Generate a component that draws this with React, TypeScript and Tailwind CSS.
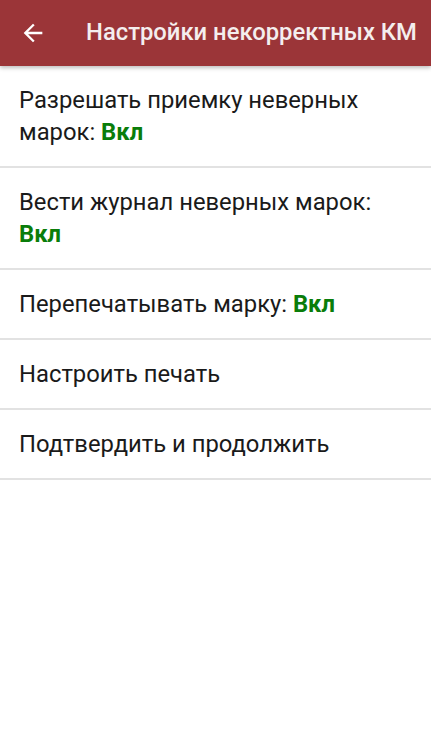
import React from 'react';

const items: { label: string; value?: string }[] = [
  { label: 'Разрешать приемку неверных марок:', value: 'Вкл' },
  { label: 'Вести журнал неверных марок:', value: 'Вкл' },
  { label: 'Перепечатывать марку:', value: 'Вкл' },
  { label: 'Настроить печать' },
  { label: 'Подтвердить и продолжить' },
];

const App: React.FC = () => {
  return (
    <div
      className="w-[431px] h-[739px] bg-white flex flex-col overflow-hidden"
      style={{ fontFamily: 'Roboto, "Noto Sans", sans-serif' }}
    >
      <header className="relative z-10 h-[66px] shrink-0 bg-[#9b3538] flex items-center shadow-[0_2px_4px_rgba(0,0,0,0.25)]">
        <button className="w-[86px] h-full flex items-center pl-[19px] text-white">
          <svg width="28" height="28" viewBox="0 0 24 24" fill="currentColor">
            <path d="M20 11H7.83l5.59-5.59L12 4l-8 8 8 8 1.41-1.41L7.83 13H20v-2z" />
          </svg>
        </button>
        <h1 className="text-[#f4eeee] text-[23.8px] font-medium whitespace-nowrap">
          Настройки некорректных КМ
        </h1>
      </header>

      <ul className="flex flex-col">
        {items.map((item) => (
          <li
            key={item.label}
            className="px-[19px] py-[18px] text-[23.8px] leading-[32px] text-[#1a1a1a] border-b-2 border-[#e2e2e2]"
          >
            {item.label}
            {item.value && (
              <>
                {' '}
                <span className="font-bold text-[#0a7d0a]">{item.value}</span>
              </>
            )}
          </li>
        ))}
      </ul>
    </div>
  );
};

export default App;
